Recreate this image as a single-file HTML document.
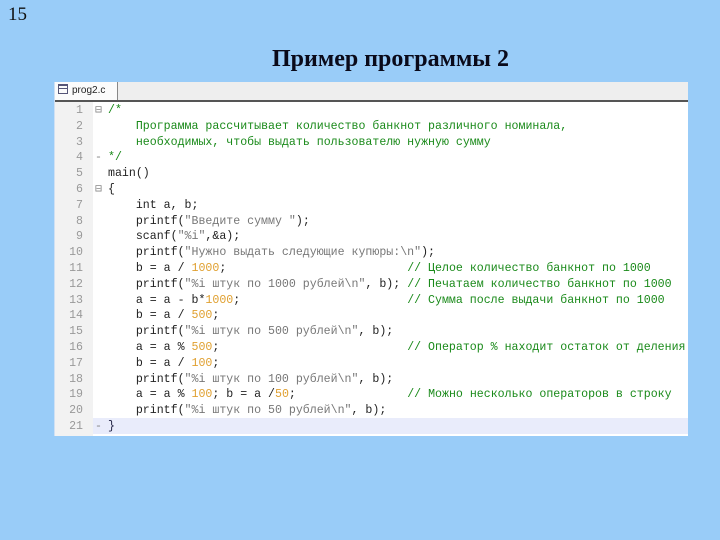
<!DOCTYPE html>
<html><head><meta charset="utf-8"><style>
body{margin:0;width:720px;height:540px;background:#99ccf8;position:relative;overflow:hidden;font-family:"Liberation Serif",serif}
.num{position:absolute;left:8px;top:4px;font-size:19px;color:#111}
.title{position:absolute;left:272px;top:46px;font-size:24px;font-weight:bold;color:#0a0a1a;white-space:nowrap}
.panel{position:absolute;left:54px;top:82px;width:633px;height:354px;background:#fff;border-left:1px solid #cfe0f4}
.tabbar{position:absolute;left:0;top:0;right:0;height:18px;background:#eeeeee;border-bottom:2px solid #555}
.tab{position:absolute;left:0;top:0;height:18px;width:62px;background:#fbfbfb;border-right:1px solid #888;font:10px "Liberation Sans",sans-serif;color:#222;line-height:17px}
.tab i{display:inline-block;width:8px;height:8px;border:1px solid #557;margin:0 4px 0 3px;vertical-align:-1px;background:linear-gradient(#557 0 1px,transparent 1px 3px,#557 3px 4px,transparent 4px)}
.gut{position:absolute;left:0;top:20px;width:38px;bottom:0;background:#f2f2f2}
.hl{position:absolute;left:38px;right:0;top:336px;height:16px;background:#e9ecfb}
.code{position:absolute;left:0;top:21px;font:11.6px/15.8px "Liberation Mono","Noto Sans CJK SC",monospace;color:#222;white-space:pre}
.ln{display:inline-block;width:28px;text-align:right;color:#999;margin-right:12px}
.fd{display:inline-block;width:13px;color:#888}
.c{color:#1a8a1a}.n{color:#e0a030}.s{color:#777}
</style></head><body>
<div class="num">15</div>
<div class="title">Пример программы 2</div>
<div class="panel">
<div class="tabbar"><div class="tab"><i></i>prog2.c</div></div>
<div class="gut"></div><div class="hl"></div>
<div class="code"><span class="ln">1</span><span class="fd">⊟</span><span class="c">/*</span>
<span class="ln">2</span><span class="fd"></span>    <span class="c">Программа рассчитывает количество банкнот различного номинала,</span>
<span class="ln">3</span><span class="fd"></span>    <span class="c">необходимых, чтобы выдать пользователю нужную сумму</span>
<span class="ln">4</span><span class="fd">-</span><span class="c">*/</span>
<span class="ln">5</span><span class="fd"></span>main()
<span class="ln">6</span><span class="fd">⊟</span>{
<span class="ln">7</span><span class="fd"></span>    int a, b;
<span class="ln">8</span><span class="fd"></span>    printf(<span class="s">"Введите сумму "</span>);
<span class="ln">9</span><span class="fd"></span>    scanf(<span class="s">"%i"</span>,&amp;a);
<span class="ln">10</span><span class="fd"></span>    printf(<span class="s">"Нужно выдать следующие купюры:\n"</span>);
<span class="ln">11</span><span class="fd"></span>    b = a / <span class="n">1000</span>;                          <span class="c">// Целое количество банкнот по 1000</span>
<span class="ln">12</span><span class="fd"></span>    printf(<span class="s">"%i штук по 1000 рублей\n"</span>, b); <span class="c">// Печатаем количество банкнот по 1000</span>
<span class="ln">13</span><span class="fd"></span>    a = a - b*<span class="n">1000</span>;                        <span class="c">// Сумма после выдачи банкнот по 1000</span>
<span class="ln">14</span><span class="fd"></span>    b = a / <span class="n">500</span>;
<span class="ln">15</span><span class="fd"></span>    printf(<span class="s">"%i штук по 500 рублей\n"</span>, b);
<span class="ln">16</span><span class="fd"></span>    a = a % <span class="n">500</span>;                           <span class="c">// Оператор % находит остаток от деления</span>
<span class="ln">17</span><span class="fd"></span>    b = a / <span class="n">100</span>;
<span class="ln">18</span><span class="fd"></span>    printf(<span class="s">"%i штук по 100 рублей\n"</span>, b);
<span class="ln">19</span><span class="fd"></span>    a = a % <span class="n">100</span>; b = a /<span class="n">50</span>;                <span class="c">// Можно несколько операторов в строку</span>
<span class="ln">20</span><span class="fd"></span>    printf(<span class="s">"%i штук по 50 рублей\n"</span>, b);
<span class="ln">21</span><span class="fd">-</span><span style="color:#224">}</span></div>
</div>
</body></html>
